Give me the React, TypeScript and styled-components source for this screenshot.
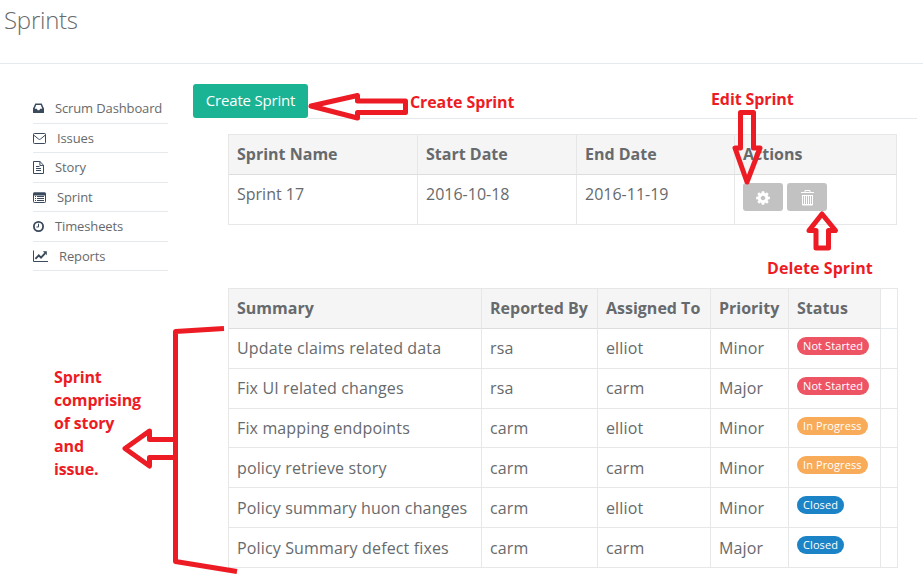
import React from "react";
import styled, { createGlobalStyle } from "styled-components";

const Global = createGlobalStyle`
  * { box-sizing: border-box; }
  body {
    margin: 0;
    background: #fff;
    color: #676a6c;
    font-family: "Open Sans", "Noto Sans", sans-serif;
    overflow: hidden;
  }
`;

const RED = "#ed1c24";

const Page = styled.div`
  position: relative;
  width: 923px;
  height: 582px;
  overflow: hidden;
`;

const Header = styled.header`
  height: 64px;
  border-bottom: 1px solid #e7eaec;
  padding: 3px 0 0 4px;
`;

const Title = styled.h1`
  margin: 0;
  font-size: 24px;
  font-weight: 300;
  line-height: 33px;
  letter-spacing: -0.25px;
`;

const Body = styled.div`
  display: flex;
`;

const Sidebar = styled.nav`
  width: 135px;
  margin: 30px 25px 0 33px;
  flex: none;
`;

const NavItem = styled.a<{ $tall?: boolean }>`
  display: flex;
  align-items: center;
  gap: 11px;
  height: ${(p) => (p.$tall ? 30 : 29)}px;
  padding-bottom: ${(p) => (p.$tall ? 1 : 0)}px;
  border-bottom: 1px solid #e7eaec;
  font-size: 13px;
  line-height: 18px;
  letter-spacing: -0.13px;
  svg { flex: none; display: block; }
`;

const Main = styled.main`
  width: 724px;
  flex: none;
  padding-top: 20px;
`;

const Toolbar = styled.div`
  display: flex;
  height: 35px;
`;

const CreateButton = styled.button`
  width: 115px;
  height: 34px;
  padding: 0 0 1px;
  border: 0;
  border-radius: 3px;
  background: #1ab394;
  color: #fff;
  font: 400 15px/33px "Open Sans", sans-serif;
  letter-spacing: -0.2px;
  white-space: nowrap;
  flex: none;
`;

const ToolbarRule = styled.div`
  flex: 1;
  border-bottom: 1px solid #e7eaec;
`;

const Table = styled.table<{ $top: number; $width: number }>`
  table-layout: fixed;
  width: ${(p) => p.$width}px;
  margin: ${(p) => p.$top}px 0 0 35px;
  border-spacing: 0;
  border-top: 1px solid #e7e7e7;
  border-left: 1px solid #e7e7e7;
  font-size: 16px;
  line-height: 22px;
`;

const Row = styled.tr<{ $height: number }>`
  height: ${(p) => p.$height}px;
`;

const HeadCell = styled.th<{ $blank?: boolean }>`
  padding: 0 0 2px 8px;
  text-align: left;
  font-weight: 700;
  white-space: nowrap;
  background: ${(p) => (p.$blank ? "#fff" : "#f5f5f6")};
  border-right: 1px solid #e7e7e7;
  border-bottom: 1px solid ${(p) => (p.$blank ? "#e7eaec" : "#ddd")};
`;

const Cell = styled.td<{ $drop?: boolean; $spread?: boolean }>`
  padding: ${(p) => (p.$drop ? 9 : 8)}px 0 0 8px;
  letter-spacing: ${(p) => (p.$spread ? 0.14 : 0)}px;
  vertical-align: top;
  white-space: nowrap;
  border-right: 1px solid #e7e7e7;
  border-bottom: 1px solid #e7e7e7;
`;

const Actions = styled.div`
  display: flex;
  gap: 4px;
`;

const IconButton = styled.button`
  display: flex;
  align-items: center;
  justify-content: center;
  width: 40px;
  height: 28px;
  padding: 1px 0 0;
  border: 0;
  border-radius: 3px;
  background: #c2c2c2;
`;

const statusColors: Record<string, string> = {
  "Not Started": "#ed5565",
  "In Progress": "#f8ac59",
  Closed: "#1c84c6",
};

const Badge = styled.span<{ $status: string }>`
  display: block;
  width: fit-content;
  height: 18px;
  padding: 0 6px;
  border-radius: 9px;
  background: ${(p) => statusColors[p.$status]};
  color: #fff;
  font-size: 11px;
  font-weight: 500;
  line-height: 18px;
  letter-spacing: 0.1px;
`;

const Note = styled.div<{ $x: number; $y: number; $ls?: number }>`
  position: absolute;
  left: ${(p) => p.$x}px;
  top: ${(p) => p.$y}px;
  color: ${RED};
  font: 700 16px/23px "Open Sans", sans-serif;
  letter-spacing: ${(p) => p.$ls ?? 0}px;
  white-space: pre;
`;

const Markup = styled.svg`
  position: absolute;
  inset: 0;
  pointer-events: none;
`;

const INK = "#3a4a5c";

const InboxIcon = () => (
  <svg width="11" height="10" viewBox="0 0 11 10">
    <path fill={INK} fillRule="evenodd" d="M2.3 .5h6.4L11 5.6V9.4q0 .6-.6.6H.6Q0 10 0 9.4V5.6zM3.2 1.9 1.7 5.7h2.1l.9 1.6h1.6l.9-1.6h2.1L7.8 1.9z" />
  </svg>
);
const EnvelopeIcon = () => (
  <svg width="13" height="11" viewBox="0 0 13 11" fill="none" stroke={INK}>
    <rect x=".5" y=".5" width="12" height="10" rx=".8" />
    <path d="M.8 2.2 5.5 6q1 .8 2 0l4.7-3.8" />
  </svg>
);
const FileIcon = () => (
  <svg width="11" height="13" viewBox="0 0 11 13" fill="none" stroke={INK}>
    <path d="M.5.5h6.4l3.6 3.6v8.4H.5zM6.9.7v3.700h3.600M3 5.500h3.500M3 7.500h5M3 9.500h5" />
  </svg>
);
const ListIcon = () => (
  <svg width="13" height="11" viewBox="0 0 13 11" fill="none" stroke={INK}>
    <rect x=".5" y="1" width="12" height="9.5" rx=".8" />
    <path d="M.5 2h12" strokeWidth="3" />
    <path d="M2 4.500h1M4 4.500h7M2 6.500h1M4 6.500h7M2 8.500h1M4 8.500h7" />
  </svg>
);
const ClockIcon = () => (
  <svg width="11" height="11" viewBox="0 0 11 11" fill="none" stroke={INK}>
    <circle cx="5.5" cy="5.5" r="4.6" strokeWidth="1.8" />
    <path d="M5.5 2.700v3.300H3.400" />
  </svg>
);
const ChartIcon = () => (
  <svg width="15" height="12" viewBox="0 0 15 12" fill="none" stroke={INK}>
    <path d="M.5 .5v11H15" />
    <path d="m2.400 8.800 3.400-3.400 2.200 2.200 4.200-4.400" strokeWidth="1.9" />
    <path d="M9.800 1.200h4v4z" fill={INK} stroke="none" />
  </svg>
);
const CogIcon = () => (
  <svg width="16" height="16" viewBox="0 0 1792 1792" fill="#fff">
    <path d="M1152 896q0-106-75-181t-181-75-181 75-75 181 75 181 181 75 181-75 75-181zm512-109v222q0 12-8 23t-20 13l-185 28q-19 54-39 91 35 50 107 138 10 12 10 25t-9 23q-27 37-99 108t-94 71q-12 0-26-9l-138-108q-44 23-91 38-16 136-29 186-7 28-36 28h-222q-14 0-24.5-8.5t-11.5-21.5l-28-184q-49-16-90-37l-141 107q-10 9-25 9-14 0-25-11-126-114-165-168-7-10-7-23 0-12 8-23 15-21 51-66.5t54-70.5q-27-50-41-99l-183-27q-13-2-21-12.5t-8-23.5v-222q0-12 8-23t19-13l186-28q14-46 39-92-40-57-107-138-10-12-10-24 0-10 9-23 26-36 98.5-107.5t94.5-71.5q13 0 26 10l138 107q44-23 91-38 16-136 29-186 7-28 36-28h222q14 0 24.5 8.5t11.5 21.5l28 184q49 16 90 37l142-107q9-9 24-9 13 0 25 10 129 119 165 170 7 8 7 22 0 12-8 23-15 21-51 66.5t-54 70.5q26 50 41 98l183 28q13 2 21 12.5t8 23.5z" />
  </svg>
);
const TrashIcon = () => (
  <svg width="13" height="16" viewBox="0 0 13 16" fill="none" stroke="#fff">
    <path d="M0 2.500h13M4 2V.5h5V2M1.500 5.500h10" />
    <path d="M1.500 5v10h10V5M3.500 5v10M5.500 5v10M7.500 5v10M9.500 5v10M1.500 14.500h10" />
  </svg>
);

const nav = [
  { label: "Scrum Dashboard", icon: <InboxIcon />, tall: true },
  { label: "Issues", icon: <EnvelopeIcon /> },
  { label: "Story", icon: <FileIcon />, tall: true },
  { label: "Sprint", icon: <ListIcon /> },
  { label: "Timesheets", icon: <ClockIcon />, tall: true },
  { label: "Reports", icon: <ChartIcon /> },
];

const issues = [
  ["Update claims related data", "rsa", "elliot", "Minor", "Not Started"],
  ["Fix UI related changes", "rsa", "carm", "Major", "Not Started"],
  ["Fix mapping endpoints", "carm", "elliot", "Minor", "In Progress"],
  ["policy retrieve story", "carm", "carm", "Minor", "In Progress"],
  ["Policy summary huon changes", "carm", "elliot", "Minor", "Closed"],
  ["Policy Summary defect fixes", "carm", "carm", "Major", "Closed"],
];

export default function App() {
  return (
    <Page>
      <Global />
      <Header>
        <Title>Sprints</Title>
      </Header>
      <Body>
        <Sidebar>
          {nav.map((n) => (
            <NavItem key={n.label} $tall={n.tall}>
              {n.icon}
              {n.label}
            </NavItem>
          ))}
        </Sidebar>
        <Main>
          <Toolbar>
            <CreateButton>Create Sprint</CreateButton>
            <ToolbarRule />
          </Toolbar>
          <Table $top={15} $width={669}>
            <colgroup>
              <col width={189} />
              <col width={159} />
              <col width={158} />
              <col width={162} />
            </colgroup>
            <tbody>
              <Row $height={40}>
                {["Sprint Name", "Start Date", "End Date", "Actions"].map((h) => (
                  <HeadCell key={h}>{h}</HeadCell>
                ))}
              </Row>
              <Row $height={50}>
                <Cell>Sprint 17</Cell>
                <Cell>2016-10-18</Cell>
                <Cell>2016-11-19</Cell>
                <Cell>
                  <Actions>
                    <IconButton aria-label="Edit"><CogIcon /></IconButton>
                    <IconButton aria-label="Delete"><TrashIcon /></IconButton>
                  </Actions>
                </Cell>
              </Row>
            </tbody>
          </Table>
          <Table $top={63} $width={670}>
            <colgroup>
              <col width={253} />
              <col width={116} />
              <col width={113} />
              <col width={78} />
              <col width={92} />
              <col width={17} />
            </colgroup>
            <tbody>
              <Row $height={40}>
                {["Summary", "Reported By", "Assigned To", "Priority", "Status"].map((h) => (
                  <HeadCell key={h}>{h}</HeadCell>
                ))}
                <HeadCell $blank />
              </Row>
              {issues.map((r, i) => (
                <Row key={r[0]} $height={i === 2 ? 39 : 40}>
                  {r.slice(0, 4).map((c, j) => (
                    <Cell key={j} $drop={i > 2} $spread>{c}</Cell>
                  ))}
                  <Cell><Badge $status={r[4]}>{r[4]}</Badge></Cell>
                  <Cell />
                </Row>
              ))}
            </tbody>
          </Table>
        </Main>
      </Body>
      <Markup width="923" height="582" viewBox="0 0 923 582" fill="none" stroke={RED} strokeWidth="5" strokeLinejoin="round">
        <path d="M311 106 357.500 95.500v5.500H405.500v11.500H357.500v5.500z" />
        <path d="M740.500 112.500h13V148h6.500L747 182 735 148h5.500z" />
        <path d="M822 214 835.500 230.500H828.500V248H816V230.500H809z" />
        <path d="M224 328.500 175.500 331.500V561.500L237 571.500" />
        <path d="M175 439.500H149.500V431L125 448.500 149.500 466V457.500H175" />
      </Markup>
      <Note $x={410} $y={91} $ls={-0.1}>Create Sprint</Note>
      <Note $x={711} $y={88} $ls={-0.1}>Edit Sprint</Note>
      <Note $x={767} $y={257} $ls={0.08}>Delete Sprint</Note>
      <Note $x={54} $y={366} $ls={-0.15}>{"Sprint\ncomprising\nof story\nand\nissue."}</Note>
    </Page>
  );
}
